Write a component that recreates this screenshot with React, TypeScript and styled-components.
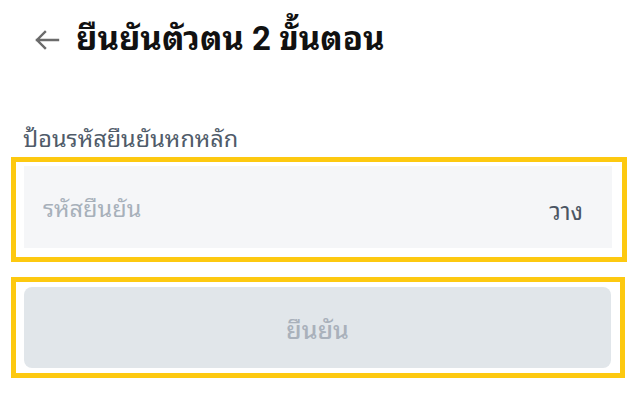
import React from 'react';
import styled, { createGlobalStyle } from 'styled-components';

/**
 * Page reset.
 */
const GlobalStyle = createGlobalStyle`
  html, body {
    margin: 0;
    padding: 0;
    background: #ffffff;
  }

  body {
    font-family: 'Roboto', 'Noto Sans Thai Looped', sans-serif;
  }
`;

/**
 * Page frame.
 */
const Page = styled.div`
  width: 639px;
  height: 420px;
  box-sizing: border-box;
  padding: 14px 12px 0 11px;
  display: flex;
  flex-direction: column;
`;

/**
 * Top bar with back arrow and title.
 */
const Header = styled.div`
  display: flex;
  align-items: center;
  gap: 15px;
  padding-left: 22px;
  height: 50px;
`;

const BackButton = styled.button`
  border: 0;
  background: none;
  padding: 0;
  width: 28px;
  height: 28px;
  margin-top: 2px;
  display: flex;
  align-items: center;
  justify-content: center;
  color: #6b6b6b;
  cursor: pointer;
`;

const Title = styled.h1`
  margin: 0;
  font-size: 33px;
  font-weight: 700;
  line-height: 50px;
  color: #111111;
`;

/**
 * Field label.
 */
const Label = styled.label`
  display: block;
  margin: 60px 0 3px 12px;
  font-size: 23.5px;
  color: #4f5b69;
  line-height: 30px;
`;

/**
 * Highlight frame drawn round a control.
 */
const Highlight = styled.div<{ $pad: string; $width: number }>`
  width: ${(p) => p.$width}px;
  box-sizing: border-box;
  border: 5px solid #fdc910;
  padding: ${(p) => p.$pad};
`;

const Field = styled.div`
  height: 82px;
  background: #f5f6f8;
  display: flex;
  align-items: center;
  justify-content: space-between;
  padding: 3px 29px 0 17px;
  box-sizing: border-box;
`;

const Input = styled.input`
  flex: 1;
  border: 0;
  background: transparent;
  outline: none;
  font-family: inherit;
  font-size: 23.5px;
  color: #1f2937;

  &::placeholder {
    color: #a7b0ba;
  }
`;

const Paste = styled.button`
  border: 0;
  background: none;
  padding: 0;
  font-family: inherit;
  font-size: 24px;
  color: #4b5563;
  cursor: pointer;
`;

const Submit = styled.button`
  width: 100%;
  height: 81px;
  border: 0;
  border-radius: 8px;
  background: #e1e6ea;
  color: #a9b1bb;
  font-family: inherit;
  font-size: 25px;
  font-weight: 500;
  cursor: not-allowed;
`;

const Spacer = styled.div`
  height: 15px;
`;

const App: React.FC = () => {
  return (
    <>
      <GlobalStyle />
      <Page>
        <Header>
          <BackButton aria-label="back">
            <svg width="26" height="22" viewBox="0 0 26 22" fill="none">
              <path
                d="M24 11H3M11 3L3 11L11 19"
                stroke="currentColor"
                strokeWidth="2.4"
                strokeLinecap="square"
              />
            </svg>
          </BackButton>
          <Title>ยืนยันตัวตน 2 ขั้นตอน</Title>
        </Header>

        <Label>ป้อนรหัสยืนยันหกหลัก</Label>
        <Highlight $pad="4px 10px 9px 8px" $width={616}>
          <Field>
            <Input placeholder="รหัสยืนยัน" />
            <Paste>วาง</Paste>
          </Field>
        </Highlight>

        <Spacer />

        <Highlight $pad="5px 9px 5px 8px" $width={614}>
          <Submit disabled>ยืนยัน</Submit>
        </Highlight>
      </Page>
    </>
  );
};

export default App;
